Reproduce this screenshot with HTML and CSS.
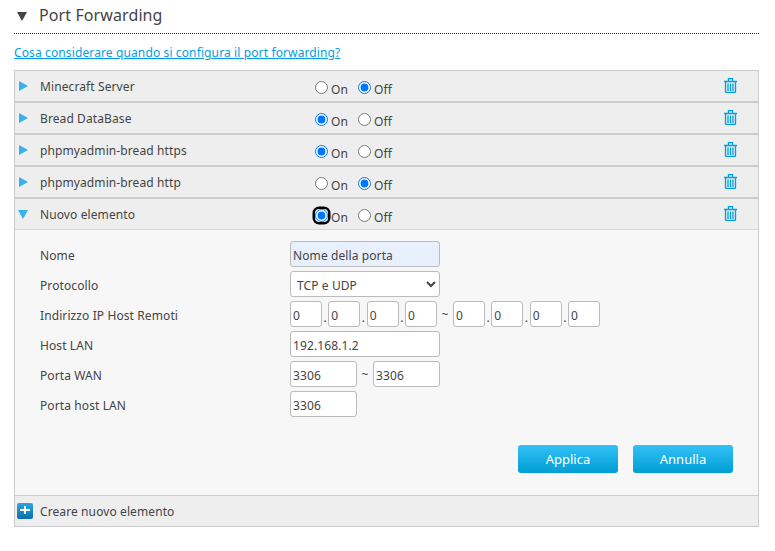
FILE: index.html
```html
<!DOCTYPE html>
<html lang="en">

<head>
    <meta charset="utf-8">
    <title>Port Forwarding</title>
    <link rel="stylesheet" href="styles.css">
</head>

<body>
    <svg class="defs" width="0" height="0">
        <symbol id="trash" viewBox="0 0 13 15">
            <path d="M4.500 3V.5h4V3M0 3.500h13M1.500 4v9.500a1 1 0 0 0 1 1h8a1 1 0 0 0 1-1V4M4 5.500v7.500M6.500 5.500v7.500M9 5.500v7.500" fill="none" stroke="#009fe3" stroke-width="1.300" />
        </symbol>
    </svg>
    <div class="title">
        <span class="title-arrow"></span>
        <h2>Port Forwarding</h2>
    </div>
    <a class="help" href="#">Cosa considerare quando si configura il port forwarding?</a>
    <div class="panel">
        <div class="row">
            <span class="arrow"></span>
            <span class="name">Minecraft Server</span>
            <div class="switch">
                <label><input type="radio" name="r1">On</label>
                <label><input type="radio" name="r1" checked>Off</label>
            </div>
            <svg class="trash"><use href="#trash" /></svg>
        </div>
        <div class="row">
            <span class="arrow"></span>
            <span class="name">Bread DataBase</span>
            <div class="switch">
                <label><input type="radio" name="r2" checked>On</label>
                <label><input type="radio" name="r2">Off</label>
            </div>
            <svg class="trash"><use href="#trash" /></svg>
        </div>
        <div class="row">
            <span class="arrow"></span>
            <span class="name">phpmyadmin-bread https</span>
            <div class="switch">
                <label><input type="radio" name="r3" checked>On</label>
                <label><input type="radio" name="r3">Off</label>
            </div>
            <svg class="trash"><use href="#trash" /></svg>
        </div>
        <div class="row">
            <span class="arrow"></span>
            <span class="name">phpmyadmin-bread http</span>
            <div class="switch">
                <label><input type="radio" name="r4">On</label>
                <label><input type="radio" name="r4" checked>Off</label>
            </div>
            <svg class="trash"><use href="#trash" /></svg>
        </div>
        <div class="row open">
            <span class="arrow down"></span>
            <span class="name">Nuovo elemento</span>
            <div class="switch">
                <label><span class="ring"><input type="radio" name="r5" checked></span>On</label>
                <label><input type="radio" name="r5">Off</label>
            </div>
            <svg class="trash"><use href="#trash" /></svg>
        </div>
        <div class="edit">
            <div class="field">
                <label>Nome</label>
                <input class="long filled" value="Nome della porta">
            </div>
            <div class="field">
                <label>Protocollo</label>
                <select class="long">
                    <option>TCP e UDP</option>
                </select>
            </div>
            <div class="field">
                <label>Indirizzo IP Host Remoti</label>
                <div class="ip">
                    <input value="0"><i>.</i><input value="0"><i>.</i><input value="0"><i>.</i><input value="0"><b>~</b><input value="0"><i>.</i><input value="0"><i>.</i><input value="0"><i>.</i><input value="0">
                </div>
            </div>
            <div class="field">
                <label>Host LAN</label>
                <input class="long" value="192.168.1.2">
            </div>
            <div class="field">
                <label>Porta WAN</label>
                <div class="range">
                    <input class="port" value="3306"><b>~</b><input class="port" value="3306">
                </div>
            </div>
            <div class="field">
                <label>Porta host LAN</label>
                <input class="port" value="3306">
            </div>
            <div class="buttons">
                <button>Applica</button>
                <button>Annulla</button>
            </div>
        </div>
        <div class="row add">
            <span class="plus"></span>
            <span class="name">Creare nuovo elemento</span>
        </div>
    </div>
</body>

</html>
```

FILE: styles.css
```css
* {
    box-sizing: border-box;
}

body {
    margin: 0;
    padding: 0 16px 0 14px;
    font-family: "Noto Sans", sans-serif;
    font-size: 12px;
    letter-spacing: 0.1px;
    color: #444;
    background: #fff;
}

.defs {
    position: absolute;
}

.title {
    display: flex;
    align-items: center;
    height: 34px;
    padding-left: 3px;
    border-bottom: 1px dotted #333;
}

.title-arrow {
    width: 0;
    height: 0;
    margin-right: 12px;
    border-left: 5px solid transparent;
    border-right: 5px solid transparent;
    border-top: 9px solid #444;
}

h2 {
    margin: 0 0 3px;
    font-size: 16px;
    font-weight: normal;
    color: #444;
}

.help {
    display: block;
    height: 36px;
    padding-top: 10px;
    font-size: 12px;
    letter-spacing: 0.12px;
    color: #00a0e0;
}

.panel {
    border-left: 1px solid #ccc;
    border-right: 1px solid #ccc;
}

.row {
    display: flex;
    align-items: center;
    height: 32px;
    padding-left: 4px;
    background: #eee;
    border-top: 1px solid #ccc;
    border-bottom: 1px solid #ccc;
}

.row.open {
    border-bottom-color: #d8d8d8;
}

.arrow {
    width: 0;
    height: 0;
    margin: -1px 12px 0 0;
    border-top: 5px solid transparent;
    border-bottom: 5px solid transparent;
    border-left: 9px solid #35b4ea;
}

.arrow.down {
    margin: 0 12px 0 -1px;
    border-left: 5px solid transparent;
    border-right: 5px solid transparent;
    border-top: 9px solid #35b4ea;
    border-bottom: 0;
}

.name {
    width: 275px;
    margin-top: 1px;
}

.switch {
    display: flex;
    gap: 10px;
    flex: 1;
}

.switch label {
    display: flex;
    align-items: center;
    padding-top: 7px;
}

.switch input {
    width: 13px;
    height: 13px;
    margin: -5px 3px 0 0;
    accent-color: #0075ff;
}

.ring {
    display: flex;
    width: 13px;
    height: 13px;
    margin: -5px 3px 0 0;
    border-radius: 4px;
    box-shadow: 0 0 0 2.500px #000;
}

.ring input {
    margin: 0;
}

.trash {
    width: 13px;
    height: 15px;
    margin: 0 21px 1px 0;
}

.edit {
    height: 265px;
    padding: 11px 25px 0;
    background: #f7f7f7;
}

.field {
    display: flex;
    align-items: center;
    height: 26px;
    margin-bottom: 4px;
}

.field > label {
    width: 250px;
    padding-top: 2px;
}

input:not([type=radio]),
select {
    height: 26px;
    padding: 2px 2px 0;
    font: 12px "Noto Sans", sans-serif;
    letter-spacing: 0.1px;
    color: #444;
    background: #fff;
    border: 1px solid #bbb;
    border-radius: 3px;
}

.long {
    width: 150px;
}

.filled {
    background: #e8f0fe !important;
}

.port {
    width: 67px;
}

.ip,
.range {
    display: flex;
    align-items: center;
}

.ip input {
    width: 32px;
}

.ip i {
    width: 6.330px;
    font-style: normal;
    text-align: center;
    padding-top: 6px;
}

.ip b,
.range b {
    width: 16px;
    font-weight: normal;
    text-align: center;
}

.buttons {
    display: flex;
    justify-content: flex-end;
    gap: 15px;
    margin: 28px 0 0;
}

button {
    width: 100px;
    height: 28px;
    border: 0;
    border-radius: 3px;
    font: 13px "Noto Sans", sans-serif;
    color: #fff;
    background: linear-gradient(#33c1f7, #009ed4);
}

.row.add {
    padding-left: 2px;
}

.plus {
    position: relative;
    width: 16px;
    height: 16px;
    margin-right: 7px;
    border-radius: 2px;
    background: linear-gradient(#2aa6e0, #0a6fa8);
}

.plus::before,
.plus::after {
    content: "";
    position: absolute;
    background: #fff;
}

.plus::before {
    left: 3px;
    top: 6px;
    width: 10px;
    height: 2px;
}

.plus::after {
    left: 7px;
    top: 3px;
    width: 2px;
    height: 8px;
}
```
